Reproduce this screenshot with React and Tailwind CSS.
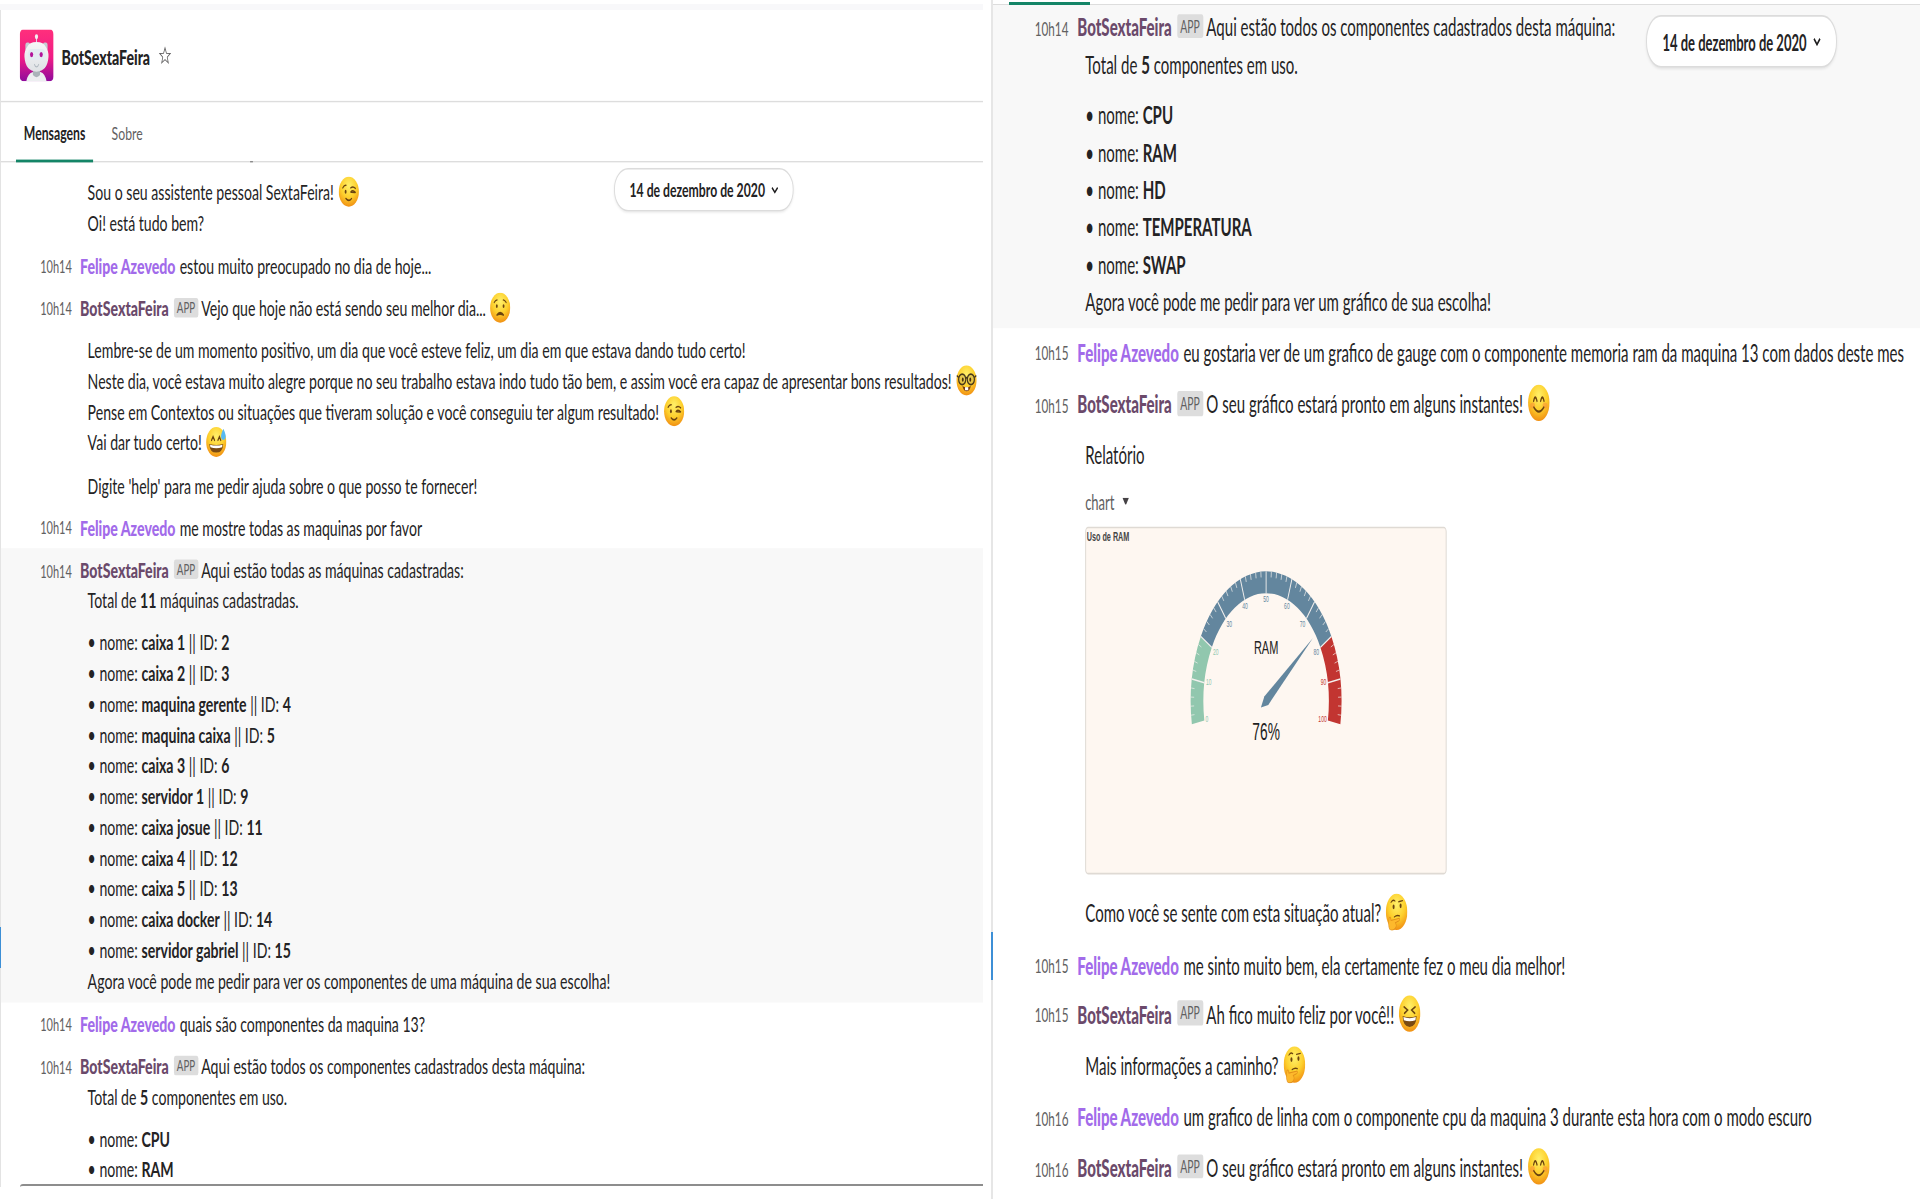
import React from 'react';

const FACES = {
  wink: (
    <g fill="none" stroke="#6b4410" strokeWidth="1.1" strokeLinecap="round">
      <ellipse cx="7.6" cy="11" rx="1" ry="1.5" fill="#6b4410" stroke="none" />
      <path d="M4.6 8.2Q6 6.2 8 6.4" />
      <path d="M13 8.3Q15.5 6.8 18 8.6" />
      <path d="M13 11.2Q15.2 9.4 18 11.4M13.6 11.3L17.6 11.6" />
      <path d="M7.8 15.8Q11 18.6 14 15.8" />
    </g>
  ),
  worried: (
    <g fill="none" stroke="#6b4410" strokeWidth="1.1" strokeLinecap="round">
      <ellipse cx="7.4" cy="9.8" rx="1" ry="1.4" fill="#6b4410" stroke="none" />
      <ellipse cx="14.6" cy="9.8" rx="1" ry="1.4" fill="#6b4410" stroke="none" />
      <path d="M4.6 7.2Q6 5.6 7.8 5.4" strokeWidth=".9" />
      <path d="M17.4 7.2Q16 5.6 14.2 5.4" strokeWidth=".9" />
      <path d="M7.2 16.4Q11 12.4 14.8 16.4Q11 15 7.2 16.4Z" fill="#6b4410" />
    </g>
  ),
  nerd: (
    <g fill="none" stroke="#4a3a1c" strokeLinecap="round">
      <path d="M6.6 15Q11 17 15.6 15Q14.5 18.8 11 18.8Q7.8 18.8 6.6 15Z" fill="#7a3c12" stroke="none" />
      <rect x="9.4" y="15.8" width="3.4" height="2.2" fill="#fff" stroke="none" />
      <circle cx="6.4" cy="10.2" r="3.8" fill="#c9b45a" fillOpacity=".45" strokeWidth="1.3" />
      <circle cx="15.6" cy="10.2" r="3.8" fill="#c9b45a" fillOpacity=".45" strokeWidth="1.3" />
      <path d="M10 9.4Q11 8.6 12 9.4M2.4 8.6L1 7.8M19.6 8.6L21 7.8" strokeWidth="1.2" />
      <ellipse cx="7" cy="10.4" rx="1" ry="1.5" fill="#4a3010" stroke="none" />
      <ellipse cx="15" cy="10.4" rx="1" ry="1.5" fill="#4a3010" stroke="none" />
    </g>
  ),
  sweat: (
    <g fill="none" stroke="#6b4410" strokeWidth="1.2" strokeLinecap="round">
      <path d="M6 9.8L7.6 7.2L9.2 9.8M12.8 9.8L14.4 7.2L15.8 9.8" />
      <path d="M3.6 12.4Q11 13.8 18.4 12.4Q18 18.6 11 18.6Q4 18.6 3.6 12.4Z" fill="#7a4a12" stroke="none" />
      <path d="M4.4 13Q11 14.2 17.6 13L17.2 14.8Q11 16 4.8 14.8Z" fill="#fff" stroke="none" />
      <path d="M18.6 1.6Q22.4 7 20.4 8.8Q18.4 10.2 16.6 8.6Q15 6.6 18.6 1.6Z" fill="#57b9f2" stroke="none" />
    </g>
  ),
  blush: (
    <g fill="none" stroke="#6b4410" strokeWidth="1.2" strokeLinecap="round">
      <ellipse cx="4.8" cy="12.6" rx="2.4" ry="1.8" fill="#f98a3c" fillOpacity=".5" stroke="none" />
      <ellipse cx="17.2" cy="12.6" rx="2.4" ry="1.8" fill="#f98a3c" fillOpacity=".5" stroke="none" />
      <path d="M5.8 10Q7.4 5.6 9.2 10M12.8 10Q14.6 5.6 16.2 10" />
      <path d="M6 13.6Q11 18.8 16 13.6" />
    </g>
  ),
  laugh: (
    <g fill="none" stroke="#6b4410" strokeWidth="1.1" strokeLinecap="round">
      <path d="M5.4 7L9 8.8L5.8 10.8M16.6 7L13 8.8L16.2 10.8" />
      <path d="M4 12.4Q11 13.8 18 12.4Q17.6 18.8 11 18.8Q4.4 18.8 4 12.4Z" fill="#7a4a12" stroke="none" />
      <path d="M4.8 13Q11 14.2 17.2 13L16.8 14.8Q11 16 5.2 14.8Z" fill="#fff" stroke="none" />
    </g>
  ),
  think: (
    <g fill="none" stroke="#6b4410" strokeWidth="1" strokeLinecap="round">
      <ellipse cx="8" cy="8" rx="1" ry="1.4" fill="#6b4410" stroke="none" />
      <ellipse cx="15" cy="7.4" rx="1" ry="1.4" fill="#6b4410" stroke="none" />
      <path d="M5.4 5.4Q7.4 3.4 9.4 4.6M13 5L17 4.4" strokeWidth=".8" />
      <path d="M8.6 14Q11.4 12.6 14 13.4" strokeWidth=".8" />
      <path
        d="M3.6 14.4Q5 13.4 5.4 16L13.6 14.8Q14.6 15.8 13 16.4L9.8 17.4Q11.6 19 9.6 20.8Q6.4 22.6 3.8 21Q2.6 18.6 3.6 14.4Z"
        fill="#fdb92c"
        stroke="#e2901a"
        strokeWidth=".6"
      />
    </g>
  ),
};

function Emoji({ name }) {
  return (
    <svg viewBox="0 0 22 22" className="ml-[4.5px] h-[22px] w-[22px] shrink-0">
      <defs>
        <radialGradient id={`face-${name}`} cx=".5" cy=".3" r=".72">
          <stop offset="0" stopColor="#fff06a" />
          <stop offset=".55" stopColor="#fdcf2c" />
          <stop offset="1" stopColor="#f08c12" />
        </radialGradient>
      </defs>
      <circle cx="11" cy="11" r="10.7" fill={`url(#face-${name})`} />
      {FACES[name]}
    </svg>
  );
}

function Line({ emoji, children }) {
  return (
    <div className="flex h-[22px] items-center whitespace-pre pl-[92.2px]">
      <span>{children}</span>
      {emoji && <Emoji name={emoji} />}
    </div>
  );
}

function Head({ time, user, emoji, children }) {
  return (
    <div className="flex h-[22px] items-center whitespace-pre">
      <span className="w-[84.2px] shrink-0 pl-[41.7px] pt-[1px] text-[11.7px] text-[#616061]">{time}</span>
      {user ? (
        <span className="mr-[4.5px] font-black text-[#a26bea]">Felipe Azevedo</span>
      ) : (
        <>
          <span className="font-black text-[#6b4a6b]">BotSextaFeira</span>
          <span className="ml-[5.5px] mr-[3.5px] flex h-[14.5px] w-[25.5px] items-center justify-center rounded-[2px] bg-[#dddddd] text-[10.4px] leading-none text-[#616061]">
            APP
          </span>
        </>
      )}
      <span>{children}</span>
      {emoji && <Emoji name={emoji} />}
    </div>
  );
}

function Item({ name, id }) {
  return (
    <Line>
      • nome: <b className="font-bold">{name}</b>
      {id && (
        <>
          {' '}|| ID: <b className="font-bold">{id}</b>
        </>
      )}
    </Line>
  );
}

function DatePill() {
  return (
    <div className="flex h-[30.5px] w-[190.5px] items-center whitespace-nowrap rounded-[15px] border border-[#dcdcdc] bg-white pl-[15.5px] text-[13px] font-bold shadow-[0_1px_2px_rgba(0,0,0,0.08)]">
      <span className="pt-[2px]">14 de dezembro de 2020</span>
      <svg viewBox="0 0 8 6" className="ml-[6.5px] mt-[1px] h-[6px] w-[8px]">
        <path d="M1 1L4 4.4L7 1" fill="none" stroke="#1d1c1d" strokeWidth="1.4" />
      </svg>
    </div>
  );
}

function Avatar() {
  return (
    <svg viewBox="0 0 36 36" className="h-[37px] w-[36px]" preserveAspectRatio="none">
      <defs>
        <linearGradient id="avatar-bg" x1="0" y1="0" x2="0" y2="1">
          <stop offset="0" stopColor="#ff2f7c" />
          <stop offset=".55" stopColor="#f01c86" />
          <stop offset="1" stopColor="#8e0a9c" />
        </linearGradient>
        <linearGradient id="avatar-head" x1="0" y1="0" x2="0" y2="1">
          <stop offset="0" stopColor="#f6f7f8" />
          <stop offset="1" stopColor="#dfe2e5" />
        </linearGradient>
      </defs>
      <rect width="36" height="36" rx="3.5" fill="url(#avatar-bg)" />
      <path d="M17.3 5h1v5h-1z" fill="#dde" />
      <circle cx="17.8" cy="5" r="1.7" fill="#f3eef2" />
      <path d="M7 36Q8.5 30.5 14 29.5H22Q27 30.5 28.5 36Z" fill="#eceef0" />
      <path d="M14 27h7.6v4.6q-3.8 3-7.6 0z" fill="#aab3b9" />
      <rect x="6" y="9" width="5" height="6" rx="2" fill="#c5ccd1" />
      <rect x="24.6" y="9" width="5" height="6" rx="2" fill="#c5ccd1" />
      <path d="M8 12Q10 8.6 17.8 8.6Q25.6 8.6 27.6 12Q31 15 30.6 19Q29.6 29 17.8 29.4Q6 29 5 19Q4.6 15 8 12Z" fill="url(#avatar-head)" />
      <rect x="8.5" y="13.6" width="19" height="7.6" rx="3.6" fill="#e3ebf2" />
      <ellipse cx="12.6" cy="17.4" rx="1.7" ry="1.8" fill="#b3159a" />
      <ellipse cx="22.8" cy="17.4" rx="1.7" ry="1.8" fill="#b3159a" />
      <path d="M15.4 24Q17.8 28 20.4 24" fill="none" stroke="#b4bcc3" strokeWidth=".9" />
    </svg>
  );
}

const CX = 180.2;
const CY = 175;
const R_OUT = 75.5;
const R_IN = 62.8;
const point = (value, r) => {
  const a = ((190 - value * 2) * Math.PI) / 180;
  return [r * Math.cos(a), -r * Math.sin(a)];
};
const band = (from, to) => {
  const [a, b] = point(from, R_OUT);
  const [c, d] = point(to, R_OUT);
  const [e, f] = point(to, R_IN);
  const [g, h] = point(from, R_IN);
  return `M${a} ${b}A${R_OUT} ${R_OUT} 0 0 1 ${c} ${d}L${e} ${f}A${R_IN} ${R_IN} 0 0 0 ${g} ${h}Z`;
};
const GREEN = '#91c7ae';
const BLUE = '#63869e';
const RED = '#c23531';
const LABELS = [
  [0, -59.2, 9.9, GREEN],
  [10, -57.5, -11.3, GREEN],
  [20, -50.5, -28.9, GREEN],
  [30, -36.8, -45.1, BLUE],
  [40, -21.2, -55.6, BLUE],
  [50, 0, -59.3, BLUE],
  [60, 20.8, -55.6, BLUE],
  [70, 36.5, -45.1, BLUE],
  [80, 50.2, -28.9, BLUE],
  [90, 57.5, -11.3, RED],
  [100, 56.5, 9.9, RED],
];

function Gauge() {
  return (
    <div className="ml-[92px] mt-[4px] h-[205px] w-[361px] overflow-hidden rounded-[3px] border border-[#dfdad4] bg-[#fef7f1]">
      <svg viewBox="0 0 360 348" preserveAspectRatio="none" className="h-full w-full font-['Liberation_Sans']">
        <g transform="translate(0.6,12.3) scale(1,1.744)">
          <text fontSize="7.25" fontWeight="700" fill="#444">Uso de RAM</text>
        </g>
        <g transform={`translate(${CX},${CY}) scale(1,1.744)`} textAnchor="middle">
          <path d={band(0, 20)} fill={GREEN} />
          <path d={band(20, 80)} fill={BLUE} />
          <path d={band(80, 100)} fill={RED} />
          {Array.from({ length: 51 }, (_, i) => {
            if (i === 0 || i === 50) return null;
            const major = i % 5 === 0;
            const [x1, y1] = point(i * 2, R_OUT);
            const [x2, y2] = point(i * 2, major ? R_IN : R_OUT - 3.4);
            return <line key={i} x1={x1} y1={y1} x2={x2} y2={y2} stroke="#f3f0ee" strokeWidth={major ? 0.9 : 0.5} />;
          })}
          {LABELS.map(([t, x, y, c]) => (
            <text key={t} x={x} y={y + 1.7} fontSize="5" fill={c}>{t}</text>
          ))}
          <text x="0" y="-27.3" fontSize="11" fill="#222">RAM</text>
          <polygon points="46.9,-36.8 2.2,1.9 -5.2,3.4 -1.8,-2.9" fill={BLUE} />
          <text x="0" y="22.5" fontSize="13.8" fill="#222">76%</text>
        </g>
      </svg>
    </div>
  );
}

function LeftPane() {
  return (
    <section className="relative h-[1187px] w-[983px] overflow-hidden">
      <div className="h-[4px]" />
      <div className="h-[6px] bg-[#f8f8fa]" />
      <div className="h-[1177px] w-[1047.5px] origin-top-left scale-x-[0.9402] scale-y-[1.398] border-l border-[#e2e2e2]">
        <header className="flex h-[66px] items-center border-b border-[#dddddd] pl-[20px]">
          <Avatar />
          <h1 className="ml-[8.3px] text-[15px] font-black">BotSextaFeira</h1>
          <svg viewBox="0 0 13 13" className="ml-[9.5px] h-[13px] w-[13px]">
            <path
              d="M6.5 1L8 4.9L12.1 5.1L8.9 7.7L10 11.8L6.5 9.5L3 11.8L4.1 7.7L.9 5.1L5 4.9Z"
              fill="none"
              stroke="#616061"
              strokeWidth=".8"
            />
          </svg>
        </header>
        <nav className="relative flex h-[43px] gap-[12px] border-b border-[#dddddd] pl-[16.3px] text-[13px]">
          <div className="-mb-px flex items-center border-b-2 border-[#148567] px-[8px] pt-[2px] font-bold">Mensagens</div>
          <div className="flex items-center px-[8px] pt-px text-[#616061]">Sobre</div>
          <span className="absolute -bottom-px left-[265px] h-px w-[3px] bg-[#8a8a8a]" />
        </nav>
        <div className="pt-[10.4px]">
          <Line emoji="wink">Sou o seu assistente pessoal SextaFeira!</Line>
          <Line>Oi! está tudo bem?</Line>
          <div className="mt-[8.3px]">
            <Head time="10h14" user>estou muito preocupado no dia de hoje...</Head>
          </div>
          <div className="mt-[8.3px]">
            <Head time="10h14" emoji="worried">Vejo que hoje não está sendo seu melhor dia...</Head>
            <div className="my-[8.3px]">
              <Line>Lembre-se de um momento positivo, um dia que você esteve feliz, um dia em que estava dando tudo certo!</Line>
              <Line emoji="nerd">
                Neste dia, você estava muito alegre porque no seu trabalho estava indo tudo tão bem, e assim você era capaz de apresentar bons resultados!
              </Line>
              <Line emoji="wink">Pense em Contextos ou situações que tiveram solução e você conseguiu ter algum resultado!</Line>
              <Line emoji="sweat">Vai dar tudo certo!</Line>
            </div>
            <Line>Digite 'help' para me pedir ajuda sobre o que posso te fornecer!</Line>
          </div>
          <div className="mb-[4.15px] mt-[8.3px]">
            <Head time="10h14" user>me mostre todas as maquinas por favor</Head>
          </div>
          <div className="bg-[#f8f8f8] py-[4.15px]">
            <Head time="10h14">Aqui estão todas as máquinas cadastradas:</Head>
            <Line>
              Total de <b className="font-bold">11</b> máquinas cadastradas.
            </Line>
            <div className="h-[8.3px]" />
            <Item name="caixa 1" id="2" />
            <Item name="caixa 2" id="3" />
            <Item name="maquina gerente" id="4" />
            <Item name="maquina caixa" id="5" />
            <Item name="caixa 3" id="6" />
            <Item name="servidor 1" id="9" />
            <Item name="caixa josue" id="11" />
            <Item name="caixa 4" id="12" />
            <Item name="caixa 5" id="13" />
            <Item name="caixa docker" id="14" />
            <Item name="servidor gabriel" id="15" />
            <Line>Agora você pode me pedir para ver os componentes de uma máquina de sua escolha!</Line>
          </div>
          <div className="mt-[4.15px]">
            <Head time="10h14" user>quais são componentes da maquina 13?</Head>
          </div>
          <div className="mt-[8.3px]">
            <Head time="10h14">Aqui estão todos os componentes cadastrados desta máquina:</Head>
            <Line>
              Total de <b className="font-bold">5</b> componentes em uso.
            </Line>
            <div className="h-[8.3px]" />
            <Item name="CPU" />
            <Item name="RAM" />
          </div>
        </div>
      </div>
      <div className="absolute left-[614px] top-[168px] origin-top-left scale-x-[0.9405] scale-y-[1.398]">
        <DatePill />
      </div>
      <div className="absolute bottom-0 left-[20px] h-[3.5px] w-[963px] rounded-tl-[4px] border-t-2 border-[#8d8d8d] bg-white" />
      <div className="absolute left-0 top-[927px] h-[41px] w-[1.3px] bg-[#3d8fd6]" />
    </section>
  );
}

function RightPane() {
  return (
    <section className="relative h-[1200px] w-[927px] overflow-hidden">
      <div className="h-[3.7px]" />
      <div className="h-[1196px] w-[927px] origin-top-left scale-x-[1.0015] scale-y-[1.697]">
        <div className="bg-[#f8f8f8] pb-[4.8px] pt-[2.1px]">
          <Head time="10h14">Aqui estão todos os componentes cadastrados desta máquina:</Head>
          <Line>
            Total de <b className="font-bold">5</b> componentes em uso.
          </Line>
          <div className="h-[7.8px]" />
          <Item name="CPU" />
          <Item name="RAM" />
          <Item name="HD" />
          <Item name="TEMPERATURA" />
          <Item name="SWAP" />
          <Line>Agora você pode me pedir para ver um gráfico de sua escolha!</Line>
        </div>
        <div className="mt-[3.2px]">
          <Head time="10h15" user>
            eu gostaria ver de um grafico de gauge com o componente memoria ram da maquina 13 com dados deste mes
          </Head>
        </div>
        <div className="mt-[8.4px]">
          <Head time="10h15" emoji="blush">O seu gráfico estará pronto em alguns instantes!</Head>
          <div className="h-[8px]" />
          <Line>Relatório</Line>
          <div className="ml-[92px] mt-[5.6px] flex h-[22px] items-center text-[13px] text-[#616061]">
            chart
            <svg viewBox="0 0 7 5" className="ml-[8px] h-[4.6px] w-[7px]">
              <path d="M0 0H7L3.5 5Z" fill="#454245" />
            </svg>
          </div>
          <Gauge />
          <div className="h-[11.4px]" />
          <Line emoji="think">Como você se sente com esta situação atual?</Line>
        </div>
        <div className="mt-[8.4px]">
          <Head time="10h15" user>me sinto muito bem, ela certamente fez o meu dia melhor!</Head>
        </div>
        <div className="mt-[6.9px]">
          <Head time="10h15" emoji="laugh">Ah fico muito feliz por você!!</Head>
          <div className="h-[8.1px]" />
          <Line emoji="think">Mais informações a caminho?</Line>
        </div>
        <div className="mt-[8.4px]">
          <Head time="10h16" user>um grafico de linha com o componente cpu da maquina 3 durante esta hora com o modo escuro</Head>
        </div>
        <div className="mt-[8px]">
          <Head time="10h16" emoji="blush">O seu gráfico estará pronto em alguns instantes!</Head>
        </div>
      </div>
      <div className="absolute inset-x-0 top-[3.7px] h-[1.8px] bg-[#dddddd]" />
      <div className="absolute left-[16px] top-[2px] h-[3.4px] w-[81px] bg-[#148567]" />
      <div className="absolute left-[653px] top-[14.5px] origin-top-left scale-y-[1.697]">
        <DatePill />
      </div>
    </section>
  );
}

export default function App() {
  return (
    <main className="flex h-[1200px] w-[1920px] items-start overflow-hidden bg-white font-[Lato,sans-serif] text-[15px] leading-[22px] text-[#242324]">
      <LeftPane />
      <div className="ml-[8px] h-[1199px] w-[2px] shrink-0 bg-[#e6e6e6] pt-[932px]">
        <div className="h-[48px] bg-[#3d8fd6]" />
      </div>
      <RightPane />
    </main>
  );
}
